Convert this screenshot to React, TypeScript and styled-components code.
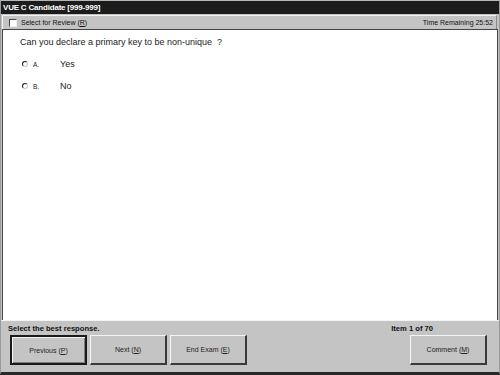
import React from "react";
import styled, { createGlobalStyle } from "styled-components";

const Global = createGlobalStyle`
  html, body { margin: 0; padding: 0; background: #c4c4c4; }
  body { font-family: "Liberation Sans", Arial, sans-serif; }
`;

const Window = styled.div`
  width: 500px;
  height: 375px;
  display: flex;
  flex-direction: column;
  background: #c4c4c4;
  box-sizing: border-box;
  border-top: 1px solid #b8b8b8;
  border-left: 1px solid #9a9a9a;
  border-right: 1px solid #9a9a9a;
  border-bottom: 3px solid #2a2a2a;
`;

const TitleBar = styled.div`
  height: 13px;
  background: #1c1c1c;
  color: #fff;
  font-weight: bold;
  font-size: 8px;
  line-height: 13px;
  padding-left: 2px;
  letter-spacing: -0.2px;
`;

const Toolbar = styled.div`
  height: 13px;
  margin: 1px 2px 0 1px;
  display: flex;
  align-items: center;
  justify-content: space-between;
  font-size: 7px;
  color: #111;
  border-top: 1px solid #f2f2f2;
  border-left: 1px solid #f2f2f2;
  border-right: 1px solid #888;
  padding: 0 3px 0 6px;
`;

const CheckLabel = styled.label`
  display: flex;
  align-items: center;
  gap: 4px;
`;

const Check = styled.span`
  width: 6px;
  height: 6px;
  background: #fff;
  border-top: 1px solid #444;
  border-left: 1px solid #444;
  border-right: 1px solid #eee;
  border-bottom: 1px solid #eee;
`;

const Content = styled.div`
  flex: 1;
  margin: 0 1px 0 1px;
  background: #fff;
  border-left: 1px solid #444;
  border-right: 1px solid #444;
  border-top: 1px solid #444;
  padding: 6px 0 0 17px;
`;

const Question = styled.div`
  font-size: 9px;
  color: #222;
  line-height: 12px;
  margin-bottom: 9px;
`;

const Option = styled.div`
  display: flex;
  align-items: center;
  height: 14px;
  margin-bottom: 8px;
  color: #222;
`;

const Radio = styled.span`
  width: 4px;
  height: 4px;
  border-radius: 50%;
  border: 1px solid #222;
  border-right-color: #c8c8c8;
  border-bottom-color: #c8c8c8;
  margin-left: 2px;
  margin-right: 5px;
`;

const Letter = styled.span`
  font-size: 6.5px;
  width: 27px;
`;

const OptText = styled.span`
  font-size: 9px;
`;

const Bottom = styled.div`
  height: 49px;
  border-top: 1px solid #f4f4f4;
  padding: 2px 12px 0 9px;
  display: flex;
  flex-direction: column;
`;

const StatusRow = styled.div`
  display: flex;
  justify-content: space-between;
  font-size: 7.6px;
  font-weight: bold;
  color: #111;
  height: 11px;
  line-height: 11px;
  margin-left: -2px;
  padding-right: 54px;
`;

const ButtonRow = styled.div`
  display: flex;
  gap: 3px;
  margin-top: 1px;
`;

const Button = styled.button<{ $default?: boolean; $right?: boolean }>`
  width: 77px;
  height: 30px;
  box-sizing: border-box;
  background: #c4c4c4;
  font-family: "Liberation Sans", Arial, sans-serif;
  font-size: 7px;
  color: #222;
  padding: 0;
  margin-left: ${(p) => (p.$right ? "auto" : "0")};
  border-style: solid;
  border-width: ${(p) => (p.$default ? "2px" : "1px 2px 2px 1px")};
  border-color: ${(p) =>
    p.$default ? "#1a1a1a" : "#f4f4f4 #3a3a3a #3a3a3a #f4f4f4"};
  box-shadow: ${(p) =>
    p.$default ? "inset 1px 1px 0 #f4f4f4, inset -1px -1px 0 #808080" : "none"};
  u { text-decoration: underline; }
`;

export default function App() {
  return (
    <>
      <Global />
      <Window>
        <TitleBar>VUE C Candidate [999-999]</TitleBar>
        <Toolbar>
          <CheckLabel>
            <Check />
            <span>Select for Review (<u>R</u>)</span>
          </CheckLabel>
          <span>Time Remaining 25:52</span>
        </Toolbar>
        <Content>
          <Question>Can you declare a primary key to be non-unique&nbsp; ?</Question>
          <Option>
            <Radio />
            <Letter>A.</Letter>
            <OptText>Yes</OptText>
          </Option>
          <Option>
            <Radio />
            <Letter>B.</Letter>
            <OptText>No</OptText>
          </Option>
        </Content>
        <Bottom>
          <StatusRow>
            <span>Select the best response.</span>
            <span>Item 1 of 70</span>
          </StatusRow>
          <ButtonRow>
            <Button $default>Previous (<u>P</u>)</Button>
            <Button>Next (<u>N</u>)</Button>
            <Button>End Exam (<u>E</u>)</Button>
            <Button $right>Comment (<u>M</u>)</Button>
          </ButtonRow>
        </Bottom>
      </Window>
    </>
  );
}
